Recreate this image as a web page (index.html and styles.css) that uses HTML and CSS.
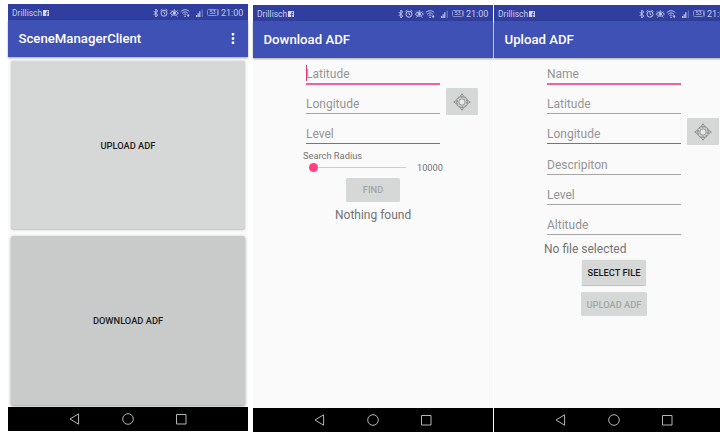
FILE: index.html
```html
<!DOCTYPE html>
<html lang="en">
<head>
<meta charset="utf-8">
<title>Scene Manager Client</title>
<link rel="stylesheet" href="styles.css">
</head>
<body>
<svg class="defs" aria-hidden="true">
  <symbol id="fb" viewBox="0 0 6 6"><path fill="#d5d9f0" d="M0 0h6v6H4.3V3.8h1V2.9h-1c0-1 .1-1.2 1-1.2V.8C3.8.7 3.3 1.3 3.3 2.9h-.9v.9h.9V6H0z"/></symbol>
  <symbol id="status" viewBox="0 0 54 10">
    <g fill="none" stroke="#c3c8e8" stroke-width=".95">
      <path d="M.7 3l4 4L2.8 9V1l1.9 2-4 4"/>
      <circle cx="11" cy="5.2" r="3"/><path d="M11 3.3v2l1.4.8M7.6 2.5l1.8-1.4M14.4 2.5l-1.8-1.4"/>
      <path d="M17.3 5.2c2-3 6-3 8 0-2 2.7-6 2.7-8 0zM18 2.5l1 1M21.3 1.2v1.4M24.6 2.5l-1 1M18.4 8.5l.8-1M24.2 8.5l-.8-1"/><circle cx="21.3" cy="5" r="1.2" fill="#c3c8e8"/>
      <path d="M27.8 3.6c2.6-2.5 6.2-2.5 8.5 0M29.2 5.2c1.9-1.7 4-1.7 5.7 0M30.5 6.7c1-.9 2-.9 3 0M34 7.4h2.3M35.2 6v3"/>
    </g>
    <path fill="#c3c8e8" d="M31.4 7.7h1.3v1.2h-1.3zM43 7h1.2v2H43zM44.6 5.2h1.2V9h-1.2zM46.2 3.2h1.2V9h-1.2z"/>
    <path fill="#8790cc" d="M48.8 1.5h.8V9h-.8z"/>
  </symbol>
  <symbol id="nav" viewBox="0 0 120 14"><g fill="none" stroke="#b5b5b5" stroke-width="1">
    <path d="M10.6 1.8v10.4L2 7z"/><circle cx="60" cy="7" r="5.3"/><path d="M108.5 2.5h9.5v9.5h-9.5z"/></g></symbol>
  <symbol id="target" viewBox="0 0 18 18"><g fill="none" stroke="#7d7f7f" stroke-width=".8">
    <circle cx="9" cy="9" r="5.9"/><circle cx="9" cy="9" r="4.9" stroke-dasharray="2 1"/><circle cx="9" cy="9" r="3.2" fill="#e6e8e7"/>
    <path d="M7.6 3L9 .7 10.4 3 9 4.3zM7.6 15L9 17.3l1.4-2.3L9 13.7zM3 7.6L.7 9 3 10.4 4.3 9zM15 7.6L17.3 9 15 10.4 13.7 9z" fill="#d6d8d7"/></g></symbol>
</svg>
<main class="screens">
  <section class="phone first">
    <div class="status"><span>Drillisch</span><svg class="fb"><use href="#fb"/></svg><svg class="signals"><use href="#status"/></svg><span class="battery">53</span><span class="clock">21:00</span></div>
    <header class="bar"><h1>SceneManagerClient</h1><svg class="more" viewBox="0 0 4 14"><path fill="#fff" d="M.8 1h2.4v2.4H.8zM.8 5.3h2.4v2.4H.8zM.8 9.6h2.4V12H.8z"/></svg></header>
    <div class="tiles"><button class="tile">UPLOAD ADF</button><button class="tile pressed">DOWNLOAD ADF</button></div>
    <nav class="nav"><svg><use href="#nav"/></svg></nav>
  </section>
  <section class="phone">
    <div class="status"><span>Drillisch</span><svg class="fb"><use href="#fb"/></svg><svg class="signals"><use href="#status"/></svg><span class="battery">53</span><span class="clock">21:00</span></div>
    <header class="bar"><h1>Download ADF</h1></header>
    <div class="form">
      <div class="field active caret">Latitude</div>
      <div class="row"><div class="field light">Longitude</div><button class="locate"><svg><use href="#target"/></svg></button></div>
      <div class="field">Level</div>
      <div class="label">Search Radius</div>
      <div class="slider"><span class="thumb"></span><span class="track"></span><span class="value">10000</span></div>
      <button class="btn find disabled">FIND</button>
      <div class="result">Nothing found</div>
    </div>
    <nav class="nav"><svg><use href="#nav"/></svg></nav>
  </section>
  <section class="phone last">
    <div class="status"><span>Drillisch</span><svg class="fb"><use href="#fb"/></svg><svg class="signals"><use href="#status"/></svg><span class="battery">53</span><span class="clock">21:00</span></div>
    <header class="bar"><h1>Upload ADF</h1></header>
    <div class="form">
      <div class="field active">Name</div>
      <div class="field light">Latitude</div>
      <div class="row"><div class="field">Longitude</div><button class="locate"><svg><use href="#target"/></svg></button></div>
      <div class="field light">Descripiton</div>
      <div class="field light">Level</div>
      <div class="field light">Altitude</div>
      <div class="file">No file selected</div>
      <button class="btn select">SELECT FILE</button>
      <button class="btn upload disabled">UPLOAD ADF</button>
    </div>
    <nav class="nav"><svg><use href="#nav"/></svg></nav>
  </section>
</main>
</body>
</html>
```
FILE: styles.css
```css
* { box-sizing: border-box; }
body { margin: 0; width: 720px; height: 437px; overflow: hidden; background: #fff; font-family: Roboto, sans-serif; }
svg { display: block; flex: none; }
button { border: 0; padding: 0; font-family: inherit; }
.defs { position: absolute; width: 0; height: 0; }
.screens { display: flex; align-items: flex-start; padding: 5px 0 0 8px; }
.phone { flex: none; width: 240px; height: 427px; display: flex; flex-direction: column; background: #fafafa; }
.first { margin: -1px 5px 0 0; }
.last { margin-left: 1px; }
.status { height: 16px; flex: none; display: flex; align-items: center; background: #303f9f; color: #c5cae9; font-size: 8.5px; padding: 1px 0 0 4px; white-space: nowrap; }
.status > span:first-child { width: 31px; }
.fb { width: 6px; height: 6px; }
.signals { width: 54px; height: 10px; margin-left: 104px; }
.battery { width: 11px; height: 7px; border: 1px solid #8790cc; border-radius: 1.5px; font-size: 5.5px; line-height: 5px; text-align: center; box-shadow: 1px 0 0 -.2px #8790cc; }
.clock { margin-left: 3px; font-size: 9px; }
.bar { height: 37px; flex: none; display: flex; align-items: center; justify-content: space-between; padding: 1px 13px 0 10.5px; background: #3f51b5; color: #fff; box-shadow: 0 1px 2px rgba(0,0,0,.35); }
h1 { margin: 0; font-size: 13.2px; font-weight: 500; line-height: 16px; }
.more { width: 4px; height: 14px; }
.tiles { flex: 1; display: flex; flex-direction: column; gap: 7px; padding: 4px 3px 2px; }
.tile { flex: none; height: 168px; border-radius: 2px; background: #d6d8d7; color: #1c1c1c; font-size: 9.3px; font-weight: 500; box-shadow: 0 .5px 2px rgba(0,0,0,.25); }
.pressed { height: 169px; background: #c9cbca; box-shadow: 0 1px 3px rgba(0,0,0,.4); }
.nav { height: 24px; flex: none; display: flex; align-items: center; justify-content: center; background: #000; }
.nav svg { width: 120px; height: 14px; }
.form { flex: 1; display: flex; flex-direction: column; padding: 3px 0 0 53px; }
.field { flex: none; width: 134px; height: 23px; margin-bottom: 7.2px; border-bottom: 1px solid #777; color: #959595; font-size: 12px; line-height: 26px; }
.light { border-color: #a6a6a6; }
.active { border-bottom: 2px solid #f2619a; height: 23.5px; margin-bottom: 6.7px; }
.caret { position: relative; }
.caret::before { content: ""; position: absolute; left: 0; top: 4px; width: 1px; height: 16px; background: #e33570; }
.row { display: flex; align-items: flex-start; gap: 6px; height: 30.2px; }
.locate { width: 32px; height: 27px; margin-top: -3px; border-radius: 1px; background: #d6d8d7; display: flex; align-items: center; justify-content: center; }
.locate svg { width: 18px; height: 18px; }
.label { margin: -2px 0 0 -3px; height: 12px; line-height: 12px; font-size: 9.3px; color: #737373; }
.slider { height: 12px; display: flex; align-items: center; padding-left: 3px; }
.thumb { width: 9px; height: 9px; border-radius: 50%; background: #ff4081; }
.track { width: 88px; height: 1px; background: #cfcfcf; }
.value { margin-left: 11px; font-size: 9.2px; line-height: 12px; padding-top: 1px; color: #737373; }
.btn { flex: none; height: 24px; border-radius: 1.5px; background: #d6d8d7; color: #1c1c1c; font-size: 9.3px; font-weight: 500; }
.disabled { color: #a4a6a5; }
.find { width: 54px; margin: 4px 0 0 40px; }
.result { margin: 6px 0 0 29px; font-size: 12px; line-height: 14px; color: #737373; }
.file { margin: 0 0 4px -3px; font-size: 12px; line-height: 14px; color: #737373; }
.select { width: 64px; height: 25px; margin-left: 35px; box-shadow: 0 .5px 1px rgba(0,0,0,.25); }
.upload { width: 66px; margin: 7px 0 0 34px; }
```
